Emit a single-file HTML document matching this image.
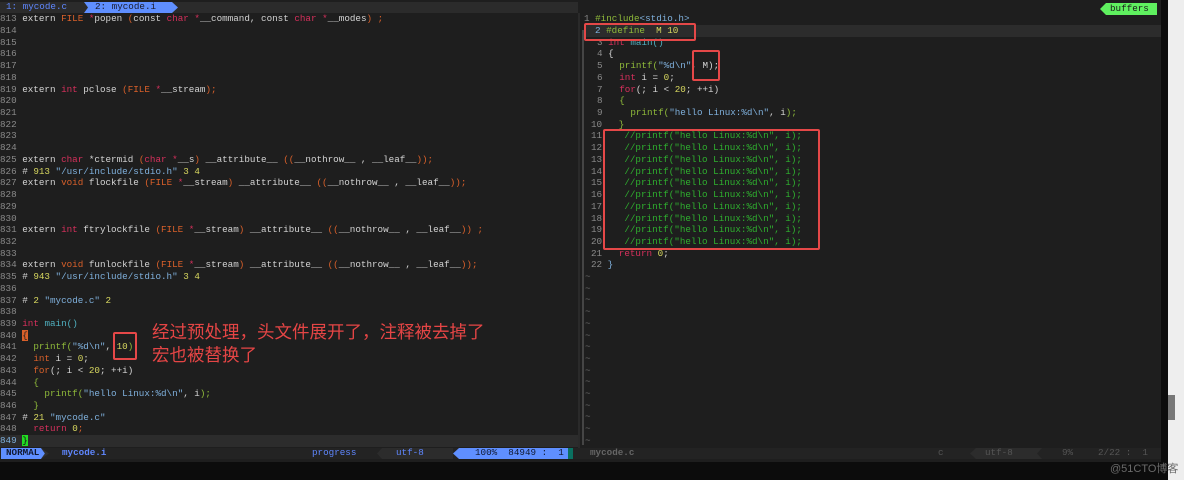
<!DOCTYPE html>
<html><head><meta charset="utf-8"><style>
body{margin:0;width:1184px;height:480px;background:#0c0c0c;overflow:hidden;position:relative;font-family:"Liberation Mono","DejaVu Sans Mono",monospace;font-size:9.25px;color:#d4d4d4}
.ed{position:absolute;left:0;top:0;width:1161px;height:462px;background:#1e1e1e}
.strip{position:absolute;left:1168px;top:0;width:16px;height:480px;background:#eeeeee}
.l{position:absolute;white-space:pre;height:12px;line-height:12px}
.n{color:#8a8a8a}
.k{color:#d0d0d0}.t{color:#d9602a}.c{color:#d6305c}.p{color:#d9602a}
.s{color:#7fb0dc}.y{color:#d7d75f}.g{color:#8fba3a}.f{color:#4fb0c0}.cm{color:#2fb02f}.pk{color:#d6305c}
.box{position:absolute;border:2px solid #e54848;border-radius:2px}
.cl{position:absolute;background:#2c2c2c;height:12px}
</style></head><body>
<div class="ed"></div>
<div class="strip"></div>
<div style="position:absolute;left:1168px;top:395px;width:7px;height:25px;background:#777"></div>
<div style="position:absolute;left:0;top:2px;width:578px;height:11px;background:#2b2b2b"></div>
<div class="l" style="left:6px;top:1px;color:#5f87ff">1: mycode.c</div>
<svg style="position:absolute;left:84px;top:2px" width="96" height="11"><polygon points="0,0 88,0 94,5.5 88,11 0,11 4,5.5" fill="#5f8fff"/></svg>
<div class="l" style="left:95px;top:1px;color:#1a1a2a">2: mycode.i</div>
<svg style="position:absolute;left:1100px;top:3px" width="57" height="12"><polygon points="6,0 57,0 57,12 6,12 0,6" fill="#5ff05f"/></svg>
<div class="l" style="left:1110px;top:3px;color:#1a1a1a">buffers</div>
<div style="position:absolute;left:578px;top:13px;width:2px;height:435px;background:#2a2a2a"></div>
<div style="position:absolute;left:582px;top:30px;width:2px;height:415px;background:#454545"></div>
<div class="cl" style="left:0;top:435px;width:578px"></div>
<div class="cl" style="left:584px;top:25px;width:577px"></div>
<div class="l" style="left:0;top:13px"><span class="n">813</span> extern <span class="t">FILE</span> <span class="c">*</span>popen <span class="p">(</span>const <span class="c">char</span> <span class="c">*</span>__command, const <span class="c">char</span> <span class="c">*</span>__modes<span class="p">) ;</span></div>
<div class="l n" style="left:0;top:25px">814</div>
<div class="l n" style="left:0;top:37px">815</div>
<div class="l n" style="left:0;top:48px">816</div>
<div class="l n" style="left:0;top:60px">817</div>
<div class="l n" style="left:0;top:72px">818</div>
<div class="l" style="left:0;top:84px"><span class="n">819</span> extern <span class="c">int</span> pclose <span class="p">(FILE</span> <span class="c">*</span>__stream<span class="p">);</span></div>
<div class="l n" style="left:0;top:95px">820</div>
<div class="l n" style="left:0;top:107px">821</div>
<div class="l n" style="left:0;top:119px">822</div>
<div class="l n" style="left:0;top:130px">823</div>
<div class="l n" style="left:0;top:142px">824</div>
<div class="l" style="left:0;top:154px"><span class="n">825</span> extern <span class="c">char</span> *ctermid <span class="p">(</span><span class="c">char</span> <span class="c">*</span>__s<span class="p">)</span> __attribute__ <span class="p">((</span>__nothrow__ , __leaf__<span class="p">));</span></div>
<div class="l" style="left:0;top:166px"><span class="n">826</span> # <span class="y">913</span> <span class="s">"/usr/include/stdio.h"</span> <span class="y">3 4</span></div>
<div class="l" style="left:0;top:177px"><span class="n">827</span> extern <span class="t">void</span> flockfile <span class="p">(FILE</span> <span class="c">*</span>__stream<span class="p">)</span> __attribute__ <span class="p">((</span>__nothrow__ , __leaf__<span class="p">));</span></div>
<div class="l n" style="left:0;top:189px">828</div>
<div class="l n" style="left:0;top:201px">829</div>
<div class="l n" style="left:0;top:213px">830</div>
<div class="l" style="left:0;top:224px"><span class="n">831</span> extern <span class="c">int</span> ftrylockfile <span class="p">(FILE</span> <span class="c">*</span>__stream<span class="p">)</span> __attribute__ <span class="p">((</span>__nothrow__ , __leaf__<span class="p">)) ;</span></div>
<div class="l n" style="left:0;top:236px">832</div>
<div class="l n" style="left:0;top:248px">833</div>
<div class="l" style="left:0;top:259px"><span class="n">834</span> extern <span class="t">void</span> funlockfile <span class="p">(FILE</span> <span class="c">*</span>__stream<span class="p">)</span> __attribute__ <span class="p">((</span>__nothrow__ , __leaf__<span class="p">));</span></div>
<div class="l" style="left:0;top:271px"><span class="n">835</span> # <span class="y">943</span> <span class="s">"/usr/include/stdio.h"</span> <span class="y">3 4</span></div>
<div class="l n" style="left:0;top:283px">836</div>
<div class="l" style="left:0;top:295px"><span class="n">837</span> # <span class="y">2</span> <span class="s">"mycode.c"</span> <span class="y">2</span></div>
<div class="l n" style="left:0;top:306px">838</div>
<div class="l" style="left:0;top:318px"><span class="n">839</span> <span class="c">int</span> <span class="f">main()</span></div>
<div class="l" style="left:0;top:330px"><span class="n">840</span> <span style="background:#d9602a;color:#1e1e1e">{</span></div>
<div class="l" style="left:0;top:341px"><span class="n">841</span>   <span class="g">printf(</span><span class="s">"%d\n"</span>, <span class="y">10</span><span class="g">)</span></div>
<div class="l" style="left:0;top:353px"><span class="n">842</span>   <span class="t">int</span> i = <span class="y">0</span>;</div>
<div class="l" style="left:0;top:365px"><span class="n">843</span>   <span class="t">for</span>(; i &lt; <span class="y">20</span>; ++i)</div>
<div class="l" style="left:0;top:377px"><span class="n">844</span>   <span class="g">{</span></div>
<div class="l" style="left:0;top:388px"><span class="n">845</span>     <span class="g">printf(</span><span class="s">"hello Linux:%d\n"</span>, i<span class="g">);</span></div>
<div class="l" style="left:0;top:400px"><span class="n">846</span>   <span class="g">}</span></div>
<div class="l" style="left:0;top:412px"><span class="n">847</span> # <span class="y">21</span> <span class="s">"mycode.c"</span></div>
<div class="l" style="left:0;top:423px"><span class="n">848</span>   <span class="pk">return</span> <span class="y">0</span><span class="p">;</span></div>
<div class="l" style="left:0;top:435px"><span class="s">849</span> <span style="background:#22dd22;color:#111">}</span></div>
<div class="l" style="left:584px;top:13px"><span class="n">1</span> <span class="g">#include</span><span class="s">&lt;stdio.h&gt;</span></div>
<div class="l" style="left:595px;top:25px"><span class="s">2</span> <span class="g">#define</span>  <span class="y">M 10</span></div>
<div class="l" style="left:597px;top:37px"><span class="n">3</span> <span class="c">int</span> <span class="f">main()</span></div>
<div class="l" style="left:597px;top:48px"><span class="n">4</span> {</div>
<div class="l" style="left:597px;top:60px"><span class="n">5</span>   <span class="g">printf(</span><span class="s">"%d\n"</span>, M);</div>
<div class="l" style="left:597px;top:72px"><span class="n">6</span>   <span class="c">int</span> i = <span class="y">0</span>;</div>
<div class="l" style="left:597px;top:84px"><span class="n">7</span>   <span class="c">for</span>(; i &lt; <span class="y">20</span>; ++i)</div>
<div class="l" style="left:597px;top:95px"><span class="n">8</span>   <span class="g">{</span></div>
<div class="l" style="left:597px;top:107px"><span class="n">9</span>     <span class="g">printf(</span><span class="s">"hello Linux:%d\n"</span>, i<span class="g">);</span></div>
<div class="l" style="left:591px;top:119px"><span class="n">10</span>   <span class="g">}</span></div>
<div class="l" style="left:591px;top:130px"><span class="n">11</span>    <span class="cm">//printf("hello Linux:%d\n", i);</span></div>
<div class="l" style="left:591px;top:142px"><span class="n">12</span>    <span class="cm">//printf("hello Linux:%d\n", i);</span></div>
<div class="l" style="left:591px;top:154px"><span class="n">13</span>    <span class="cm">//printf("hello Linux:%d\n", i);</span></div>
<div class="l" style="left:591px;top:166px"><span class="n">14</span>    <span class="cm">//printf("hello Linux:%d\n", i);</span></div>
<div class="l" style="left:591px;top:177px"><span class="n">15</span>    <span class="cm">//printf("hello Linux:%d\n", i);</span></div>
<div class="l" style="left:591px;top:189px"><span class="n">16</span>    <span class="cm">//printf("hello Linux:%d\n", i);</span></div>
<div class="l" style="left:591px;top:201px"><span class="n">17</span>    <span class="cm">//printf("hello Linux:%d\n", i);</span></div>
<div class="l" style="left:591px;top:213px"><span class="n">18</span>    <span class="cm">//printf("hello Linux:%d\n", i);</span></div>
<div class="l" style="left:591px;top:224px"><span class="n">19</span>    <span class="cm">//printf("hello Linux:%d\n", i);</span></div>
<div class="l" style="left:591px;top:236px"><span class="n">20</span>    <span class="cm">//printf("hello Linux:%d\n", i);</span></div>
<div class="l" style="left:591px;top:248px"><span class="n">21</span>   <span class="pk">return</span> <span class="y">0</span>;</div>
<div class="l" style="left:591px;top:259px"><span class="n">22</span> <span class="s">}</span></div>
<div class="l n" style="left:585px;top:271px;line-height:11.7px;color:#666">~<br>~<br>~<br>~<br>~<br>~<br>~<br>~<br>~<br>~<br>~<br>~<br>~<br>~<br>~</div>
<div style="position:absolute;left:0;top:448px;width:1161px;height:11px;background:#232323"></div>
<svg style="position:absolute;left:1px;top:448px" width="60" height="11"><polygon points="0,0 40,0 44,5.5 40,11 0,11" fill="#5f8fff"/><polygon points="40,0 48,5.5 40,11 44,5.5" fill="#303030"/></svg>
<div class="l" style="left:6px;top:447px;color:#101830;font-weight:bold">NORMAL</div>
<div class="l" style="left:62px;top:447px;color:#5f87ff;font-weight:bold">mycode.i</div>
<div class="l" style="left:312px;top:447px;color:#5f87ff">progress</div>
<svg style="position:absolute;left:328px;top:448px" width="250" height="11"><polygon points="54,0 125,0 125,11 54,11 49,5.5" fill="#2c2c2c"/><polygon points="131,0 240,0 240,11 131,11 125,5.5" fill="#5f8fff"/><rect x="240" y="0" width="5" height="11" fill="#0a7060"/></svg>
<div class="l" style="left:396px;top:447px;color:#5f87ff">utf-8</div>
<div class="l" style="left:475px;top:447px;color:#101830">100%  84949 :  1</div>
<div class="l" style="left:590px;top:447px;color:#666;font-weight:bold">mycode.c</div>
<div class="l" style="left:938px;top:447px;color:#555">c</div>
<svg style="position:absolute;left:970px;top:448px" width="90" height="11"><polygon points="6,0 72,0 67,5.5 72,11 6,11 0,5.5" fill="#2c2c2c"/></svg>
<div class="l" style="left:985px;top:447px;color:#555">utf-8</div>
<div class="l" style="left:1062px;top:447px;color:#555">9%</div>
<div class="l" style="left:1098px;top:447px;color:#555">2/22 :  1</div>
<div style="position:absolute;left:1110px;top:460px;font-family:'Liberation Sans','Noto Sans CJK SC',sans-serif;font-size:11px;color:#6a6a6a">@51CTO博客</div>
<div class="box" style="left:584px;top:23px;width:108px;height:14px"></div>
<div class="box" style="left:692px;top:50px;width:24px;height:27px"></div>
<div class="box" style="left:603px;top:129px;width:213px;height:117px"></div>
<div class="box" style="left:113px;top:332px;width:20px;height:24px"></div>
<div style="position:absolute;left:152px;top:321px;font-family:'Liberation Sans','Noto Sans CJK SC',sans-serif;font-size:17.5px;line-height:23px;color:#e54545">经过预处理，头文件展开了，注释被去掉了<br>宏也被替换了</div>
</body></html>
